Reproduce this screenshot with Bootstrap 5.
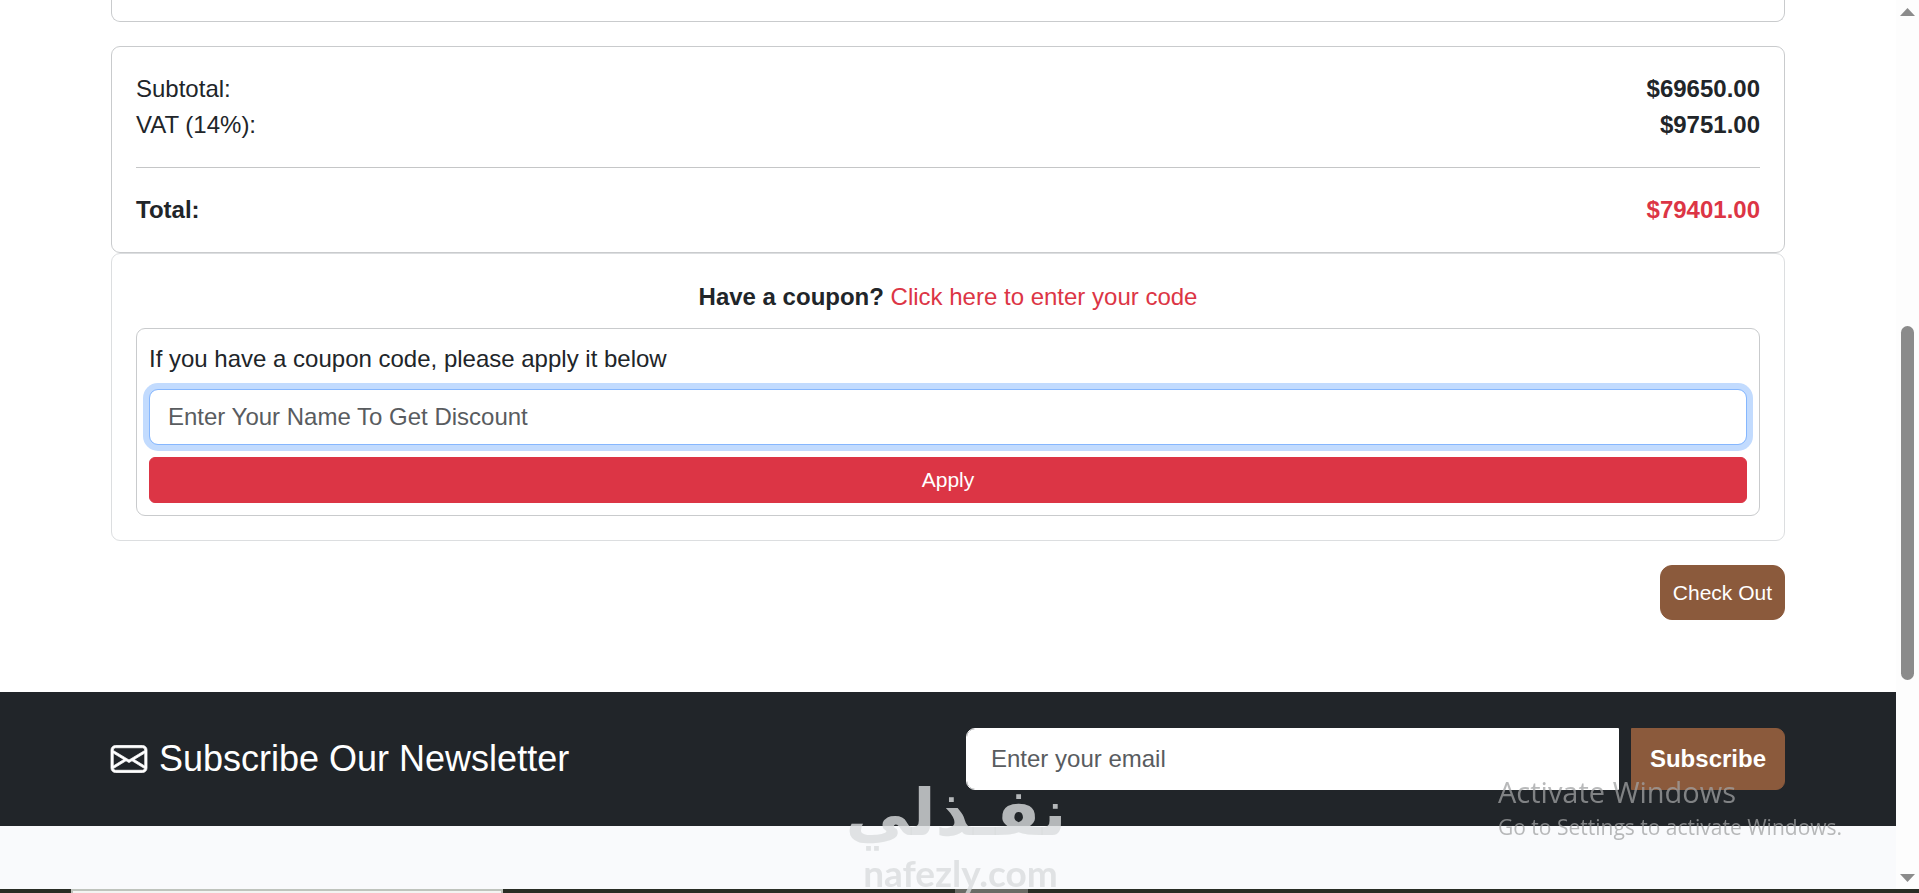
<!DOCTYPE html>
<html lang="en">
<head>
<meta charset="utf-8">
<meta name="viewport" content="width=device-width, initial-scale=1">
<title>Cart</title>
<link href="https://cdn.jsdelivr.net/npm/bootstrap@5.3.0/dist/css/bootstrap.min.css" rel="stylesheet">
<style>
  html { font-size: 24px; }
  body { font-family: "Liberation Sans", Arial, sans-serif; color: #212529; background: #fff; }
  .shop-wrap { max-width: 1710px; padding-left: 18px; padding-right: 18px; }
  .panel { border: 1px solid #c9cbcd; border-radius: 9px; background: #fff; }
  .panel-soft { border-color: #dcdee0; }
  .panel-end { border-top: 0; border-radius: 0 0 9px 9px; height: 22px; }
  .rule { border-top: 1px solid #c5c6c7; opacity: 1; }
  .coupon-lead { line-height: 38px; }
  .coupon-input { padding: 9px 18px; border-radius: 9px; }
  .coupon-input:focus { border-color: #86b7fe; box-shadow: 0 0 0 6px #c2dbfe; }
  .coupon-input::placeholder, .mail-input::placeholder { color: #595c5f; }
  .btn-apply { font-size: 21px; line-height: 32px; padding: 6px 12px; border-radius: 6px; }
  .btn-brown { background: #8b5a3c; color: #fff; border-color: #8b5a3c; }
  .btn-brown:hover { background: #74492f; color: #fff; }
  .btn-checkout { font-size: 21px; line-height: 31px; padding: 11px 12px; border-radius: 12px; }
  .news { background: #212529; padding: 36px 0; }
  .news h2 { font-size: 36px; line-height: 44px; }
  .mail-input { padding: 12px 24px; border-radius: 9px 0 0 9px; border-color: #fff; }
  .btn-subscribe { padding: 12px 18px; border-radius: 0 9px 9px 0; white-space: nowrap; }
  .below { background: #f9fafc; }
  .scroll-rail { flex: 0 0 23px; background: #fdfdfd; padding: 8px 4px 7px; }
  .scroll-thumb { width: 13px; border-radius: 7px; background: #8b8b8b; flex: 354; }
  .gap-above { flex: 310; } .gap-below { flex: 194; }
  .taskbar { height: 4px; background: #292d25; }
  .task-start { width: 71px; }
  .task-search { width: 432px; background: #f3f4f2; border: 2px solid #bfc4bd; border-bottom: 0; }
  .task-active { width: 73px; margin-left: 452px; background: #6a6b65; }
  .activate-note { right: 80px; bottom: 51px; width: 341px; font-family: "Open Sans", "Noto Sans", sans-serif; color: rgba(160,162,163,.75); pointer-events: none; }
  .activate-note .big-line { font-size: 29px; line-height: 40px; }
  .activate-note .low-line { font-size: 21px; line-height: 30px; white-space: nowrap; }
  .brand-mark { left: 50%; bottom: 0; width: 212px; margin-left: -105px; color: rgba(218,220,221,.8); text-align: center; pointer-events: none; }
  .brand-ar { font: bold 65px/80px "DejaVu Sans", sans-serif; white-space: nowrap; }
  .brand-en { font: bold 37px/40px Lato, sans-serif; }
</style>
</head>
<body class="vh-100 overflow-hidden position-relative d-flex flex-column">
<div class="d-flex flex-fill overflow-hidden">
  <div class="flex-fill d-flex flex-column">
    <main class="container-fluid shop-wrap">
      <div class="panel panel-end mb-3"></div>
      <section class="panel p-3">
        <div class="d-flex justify-content-between"><span>Subtotal:</span><strong>$69650.00</strong></div>
        <div class="d-flex justify-content-between"><span>VAT (14%):</span><strong>$9751.00</strong></div>
        <hr class="rule my-3">
        <div class="d-flex justify-content-between"><strong>Total:</strong><strong class="text-danger">$79401.00</strong></div>
      </section>
      <section class="panel panel-soft p-3">
        <div class="coupon-lead text-center"><strong>Have a coupon?</strong> <a href="#coupon" class="text-danger text-decoration-none">Click here to enter your code</a></div>
        <form class="panel d-flex flex-column gap-2 mt-2 p-2" onsubmit="return false">
          <label for="coupon">If you have a coupon code, please apply it below</label>
          <input id="coupon" class="form-control coupon-input" type="text" placeholder="Enter Your Name To Get Discount" autofocus>
          <button class="btn btn-danger btn-apply w-100" type="submit">Apply</button>
        </form>
      </section>
      <div class="d-flex justify-content-end mt-3 mb-5">
        <button class="btn btn-brown btn-checkout" type="button">Check Out</button>
      </div>
    </main>
    <section class="news">
      <div class="container-fluid shop-wrap">
        <div class="row gx-4 align-items-center">
          <div class="col-6 d-flex align-items-center gap-2 text-white">
            <svg class="overflow-visible" width="36" height="36" viewBox="0 0 16 16" fill="currentColor" stroke="currentColor" stroke-width=".35" aria-hidden="true"><path d="M0 4a2 2 0 0 1 2-2h12a2 2 0 0 1 2 2v8a2 2 0 0 1-2 2H2a2 2 0 0 1-2-2V4Zm2-1a1 1 0 0 0-1 1v.217l7 4.2 7-4.2V4a1 1 0 0 0-1-1H2Zm13 2.383-4.708 2.825L15 11.105V5.383Zm-.034 6.876-5.64-3.471L8 9.583l-1.326-.795-5.64 3.47A1 1 0 0 0 2 13h12a1 1 0 0 0 .966-.741ZM1 11.105l4.708-2.897L1 5.383v5.722Z"/></svg>
            <h2 class="m-0 fw-normal">Subscribe Our Newsletter</h2>
          </div>
          <form class="col-6 d-flex gap-2" onsubmit="return false">
            <input class="form-control mail-input" type="email" placeholder="Enter your email" aria-label="Enter your email">
            <button class="btn btn-brown btn-subscribe fw-bold" type="submit">Subscribe</button>
          </form>
        </div>
      </div>
    </section>
    <div class="below flex-fill"></div>
  </div>
  <div class="scroll-rail d-flex flex-column align-items-center" aria-hidden="true">
    <svg width="15" height="8"><path d="M0 8 7.5 0 15 8Z" fill="#8b8b8b"/></svg>
    <div class="gap-above"></div><div class="scroll-thumb"></div><div class="gap-below"></div>
    <svg width="15" height="8"><path d="M0 0h15L7.500 8Z" fill="#8b8b8b"/></svg>
  </div>
</div>
<div class="taskbar d-flex" aria-hidden="true"><div class="task-start"></div><div class="task-search"></div><div class="task-active"></div></div>
<div class="brand-mark position-absolute"><div class="brand-ar" lang="ar" dir="rtl">نفـذلي</div><div class="brand-en">nafezly.com</div></div>
<div class="activate-note position-absolute"><div class="big-line">Activate Windows</div><div class="low-line">Go to Settings to activate Windows.</div></div>
<script src="https://cdn.jsdelivr.net/npm/bootstrap@5.3.0/dist/js/bootstrap.bundle.min.js"></script>
<script>document.getElementById('coupon').focus();</script>
</body>
</html>
